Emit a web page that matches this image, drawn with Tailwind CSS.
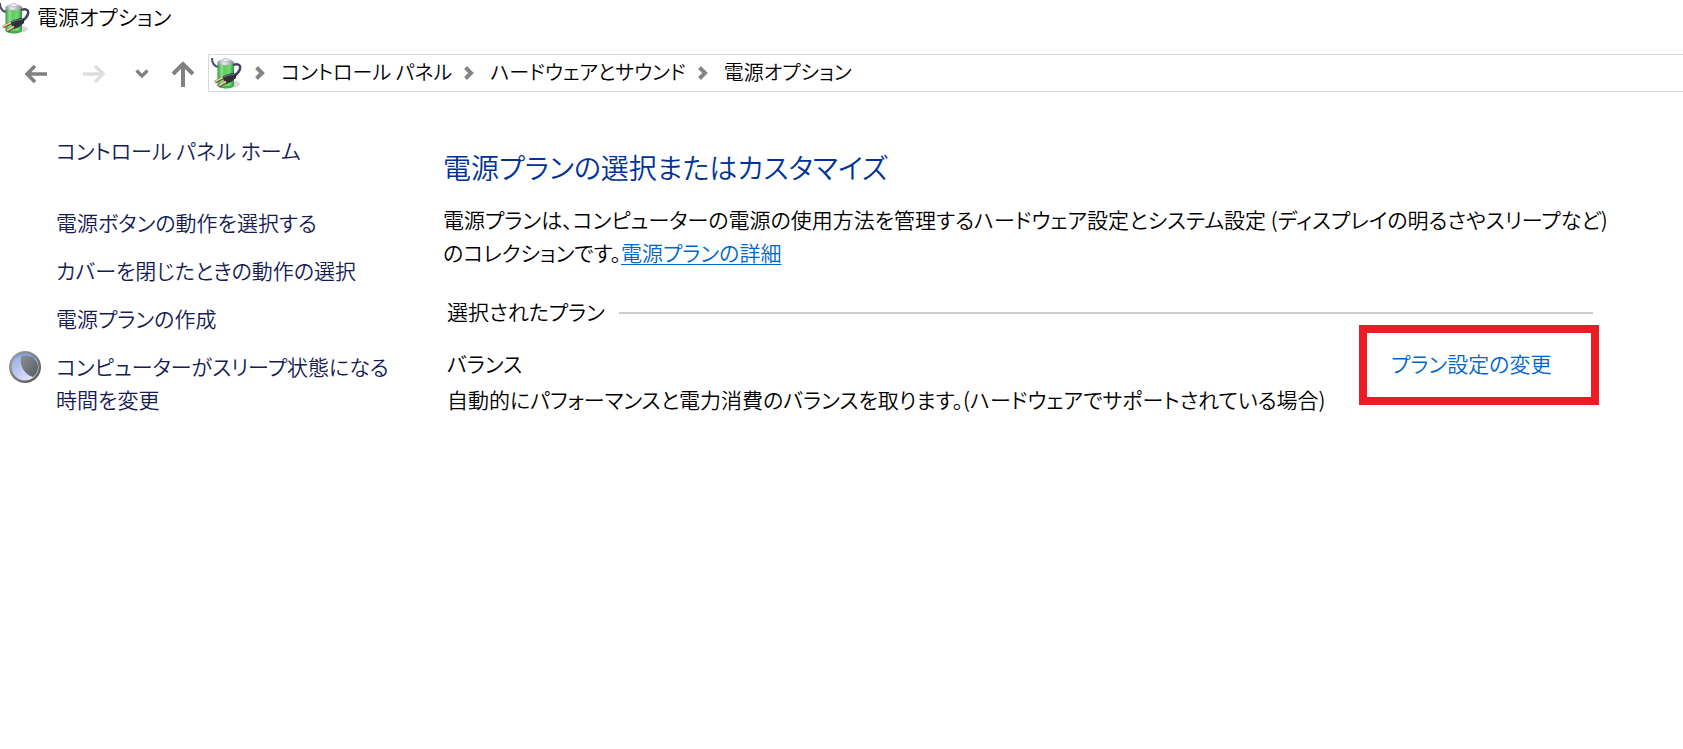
<!DOCTYPE html>
<html lang="ja">
<head>
  <meta charset="UTF-8" />
  <meta name="viewport" content="width=device-width, initial-scale=1.0" />
  <title>電源オプション</title>
  <script src="https://cdn.jsdelivr.net/npm/@tailwindcss/browser@4"></script>
</head>
<body class="min-h-screen bg-white text-black font-['Noto_Sans_CJK_JP',sans-serif] font-[350] text-[21px] leading-[33px] [font-feature-settings:'palt']">

  <!-- Shared icons -->
  <svg class="absolute size-0" aria-hidden="true">
    <defs>
      <linearGradient id="green" x1="0" x2="1" y1="0" y2="0">
        <stop offset="0" stop-color="#2f9a3c" />
        <stop offset=".25" stop-color="#8fe08e" />
        <stop offset=".4" stop-color="#5fcb62" />
        <stop offset=".75" stop-color="#6fdc70" />
        <stop offset="1" stop-color="#2b9238" />
      </linearGradient>
      <linearGradient id="cap" x1="0" x2="1" y1="0" y2="0">
        <stop offset="0" stop-color="#8f9498" />
        <stop offset=".4" stop-color="#f0f1f2" />
        <stop offset="1" stop-color="#85898d" />
      </linearGradient>
    </defs>
    <symbol id="battery" viewBox="0 0 32 32">
      <ellipse cx="21" cy="27" rx="8" ry="3.5" fill="#000" opacity=".15" />
      <path d="M1 1c0 5 2 8 6 9" fill="none" stroke="#4a506a" stroke-width="2" />
      <path d="M6.500 5v23c0 4.500 16.500 4.500 16.500 0V5z" fill="url(#green)" />
      <path d="M6.500 27v1c0 4.500 16.500 4.500 16.500 0v-1c-2 3-14.500 3-16.500 0z" fill="#3fae4a" />
      <ellipse cx="14.75" cy="5.500" rx="8.250" ry="2.800" fill="url(#cap)" stroke="#a4a8ab" stroke-width=".5" />
      <ellipse cx="14.75" cy="3.200" rx="3.600" ry="1.700" fill="#eceeef" stroke="#9da2a6" stroke-width=".6" />
      <path d="M22 8c5-2 8 0 7 4-1 3-3 5-6 7" fill="none" stroke="#41465e" stroke-width="2.4" />
      <path d="M11 20l4-2 6-2 4 1v4l-5 4-5 2z" fill="#2f3038" />
      <path d="M13 20l5-2 5-.5" fill="none" stroke="#7c7f8c" />
      <path d="M12 21l-8 4M15 25l-7 4" stroke="#5d4526" stroke-width="3" />
      <path d="M12 20.500l-8 4M15 24.500l-7 4" stroke="#ecd6a4" stroke-width="1.5" />
    </symbol>
    <symbol id="crumb" viewBox="0 0 10 14">
      <path d="M1.5 1.5L7 7l-5.500 5.500" fill="none" stroke="#858585" stroke-width="4" />
    </symbol>
  </svg>

  <header>
    <div class="flex h-9 items-center gap-[6px]">
      <svg class="-ml-px size-8" aria-hidden="true"><use href="#battery" /></svg>
      <h1 class="pb-1">電源オプション</h1>
    </div>

    <!-- Navigation -->
    <div class="mt-[18px] flex h-[38px] items-center">
      <div class="flex w-52 shrink-0 items-center pt-[2px] pl-6">
        <button type="button" aria-label="戻る" class="w-6">
          <svg class="block" width="24" height="20" fill="none" stroke="#808080" stroke-width="3.5"><path d="M23 10H3M11 2l-8 8 8 8" /></svg>
        </button>
        <button type="button" aria-label="進む" class="ml-[34px] w-6">
          <svg class="block" width="24" height="20" fill="none" stroke="#dedede" stroke-width="3.5"><path d="M1 10h20M13 2l8 8-8 8" /></svg>
        </button>
        <button type="button" aria-label="最近表示した場所" class="ml-[29px] w-4">
          <svg class="block" width="14" height="10" fill="none" stroke="#808080" stroke-width="3.2"><path d="M1.5 1.5L7 7l5.500-5.500" /></svg>
        </button>
        <button type="button" aria-label="上へ" class="ml-5 w-6">
          <svg class="block" width="24" height="26" fill="none" stroke="#808080" stroke-width="4"><path d="M12 26V4M2 13L12 3l10 10" /></svg>
        </button>
      </div>
      <nav class="flex h-full min-w-0 flex-1 items-center border border-r-0 border-[#d9d9d9] pl-[2px] text-[20px] whitespace-nowrap">
        <svg class="size-8" aria-hidden="true"><use href="#battery" /></svg>
        <svg class="ml-3 h-[14px] w-[10px]" aria-hidden="true"><use href="#crumb" /></svg>
        <a href="#" class="ml-4 pb-1">コントロール パネル</a>
        <svg class="ml-3 h-[14px] w-[10px]" aria-hidden="true"><use href="#crumb" /></svg>
        <a href="#" class="ml-4 pb-1">ハードウェアとサウンド</a>
        <svg class="ml-3 h-[14px] w-[10px]" aria-hidden="true"><use href="#crumb" /></svg>
        <a href="#" class="ml-4 pb-1">電源オプション</a>
      </nav>
    </div>
  </header>

  <div class="flex">
    <!-- Tasks -->
    <aside class="w-[443px] shrink-0 pt-[42px] text-[#151c55]">
      <a href="#" class="ml-14 block">コントロール パネル ホーム</a>
      <ul class="mt-[39px] space-y-[15px]">
        <li class="pl-14"><a href="#">電源ボタンの動作を選択する</a></li>
        <li class="pl-14"><a href="#">カバーを閉じたときの動作の選択</a></li>
        <li class="pl-14"><a href="#">電源プランの作成</a></li>
        <li class="flex items-start">
          <span class="w-14 shrink-0 pt-px pl-[9px]">
            <svg class="size-8" viewBox="0 0 32 32" aria-hidden="true">
              <defs>
                <linearGradient id="rim" x1="0" x2="1" y1="0" y2="1">
                  <stop offset="0" stop-color="#a8a8a8" />
                  <stop offset="1" stop-color="#505050" />
                </linearGradient>
                <linearGradient id="moon" x1="0" x2="1" y1="0" y2="1">
                  <stop offset="0" stop-color="#8fa6dc" />
                  <stop offset=".5" stop-color="#c3ccf3" />
                  <stop offset="1" stop-color="#f0f2ff" />
                </linearGradient>
                <linearGradient id="shade" x1="0" x2="1" y1="0" y2="1">
                  <stop offset="0" stop-color="#8a9098" />
                  <stop offset="1" stop-color="#555b5e" />
                </linearGradient>
              </defs>
              <circle cx="16" cy="16" r="16" fill="url(#rim)" />
              <circle cx="16" cy="16" r="13.5" fill="url(#moon)" />
              <path d="M12 5c9-3 17 3 17 10.500 0 5-2 8-5 10.500-8-2-14-11-12-21z" fill="url(#shade)" />
              <path d="M7 6c6-5 15-4 19 2" fill="none" stroke="#6f9ad6" stroke-width="1.5" />
            </svg>
          </span>
          <a href="#">コンピューターがスリープ状態になる<br>時間を変更</a>
        </li>
      </ul>
    </aside>

    <main class="min-w-0 flex-1 pt-[55px] pr-[84px]">
      <h2 class="text-[28px] leading-10 text-[#003399]">電源プランの選択またはカスタマイズ</h2>
      <p class="mt-4 whitespace-nowrap">電源プランは、コンピューターの電源の使用方法を管理するハードウェア設定とシステム設定 (ディスプレイの明るさやスリープなど)<br>のコレクションです。<a href="#" class="text-[#0066cc] underline decoration-1 underline-offset-3">電源プランの詳細</a></p>

      <section class="mt-8 pl-1">
        <div class="mr-[6px] flex items-center gap-[14px]">
          <h3 class="pb-1 leading-5">選択されたプラン</h3>
          <div class="h-[2px] flex-1 bg-[#cccccc]"></div>
        </div>
        <div class="flex items-start justify-between">
          <div class="space-y-[3px] pt-[22px] whitespace-nowrap">
            <h4>バランス</h4>
            <p>自動的にパフォーマンスと電力消費のバランスを取ります。(ハードウェアでサポートされている場合)</p>
          </div>
          <a href="#" class="flex h-20 w-60 shrink-0 items-center border-8 border-[#ed1c24] pb-1 pl-6 text-[#0066cc]">プラン設定の変更</a>
        </div>
      </section>
    </main>
  </div>
</body>
</html>
